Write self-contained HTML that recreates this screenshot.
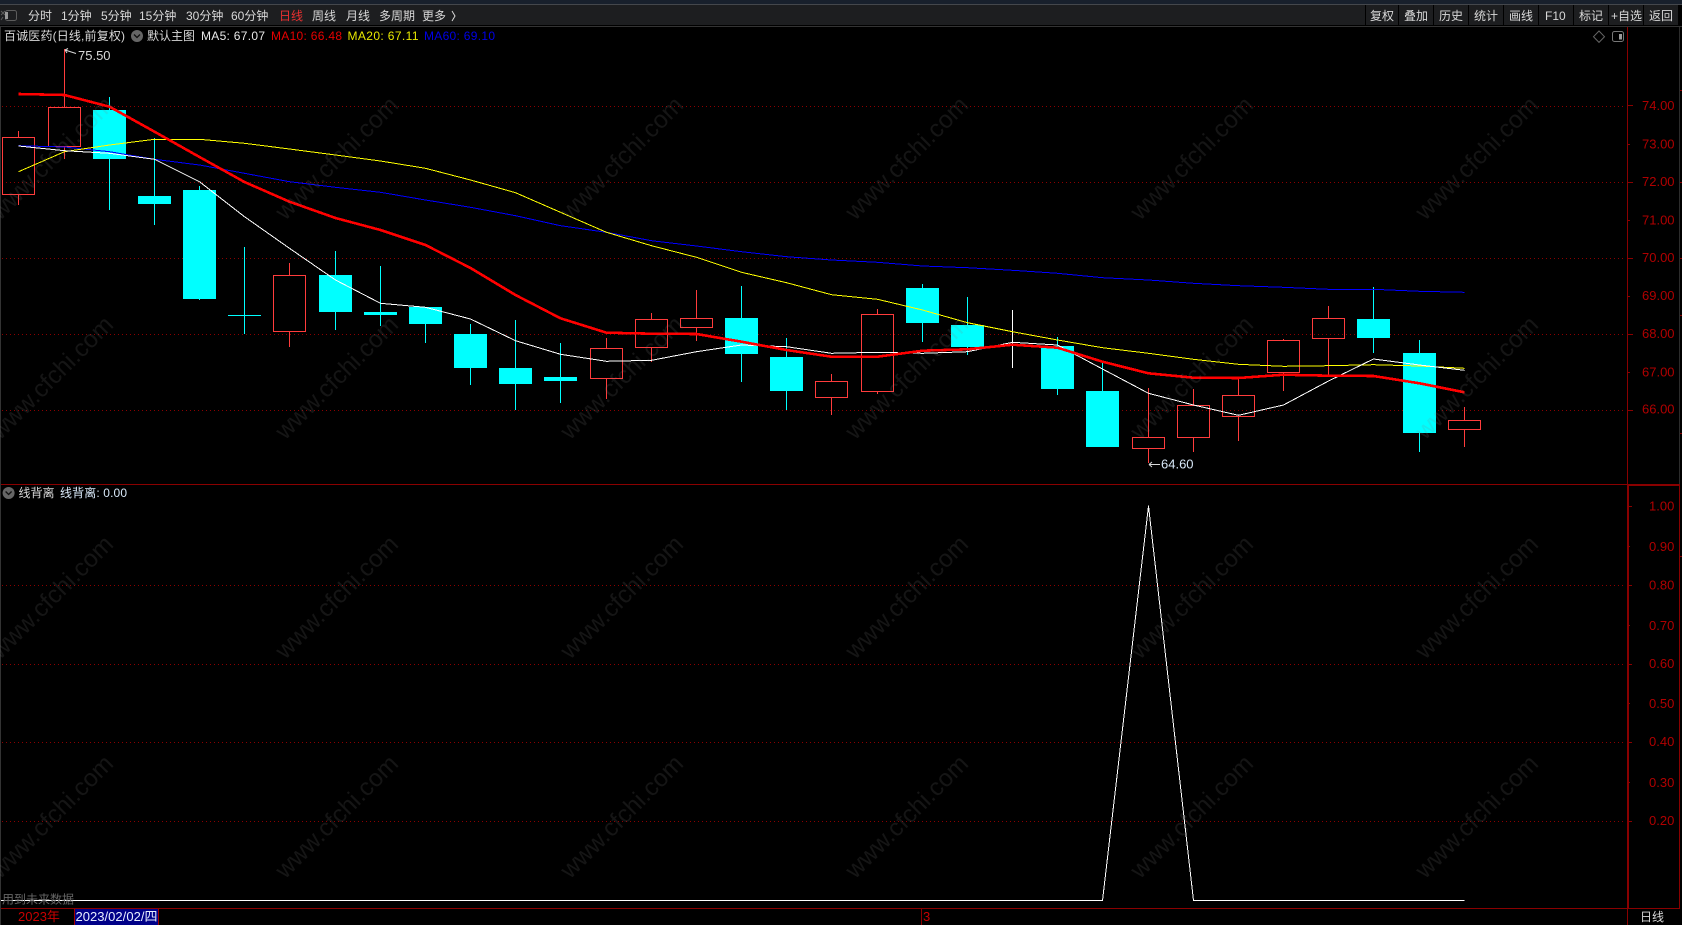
<!DOCTYPE html>
<html lang="zh-CN"><head><meta charset="utf-8"><title>百诚医药</title>
<style>
html,body{margin:0;padding:0;background:#000;width:1682px;height:925px;overflow:hidden}
svg{display:block;position:absolute;left:0;top:0}
text{font-family:"Liberation Sans","Noto Sans CJK SC",sans-serif;font-size:12px}
.c{shape-rendering:crispEdges}
.wm text{font-size:24.500px;fill:#808080;opacity:.16}
.tb text{fill:#d8d8d8}
.ax text{fill:#b00000;font-size:13px}
</style></head><body>
<svg width="1682" height="925" viewBox="0 0 1682 925" xmlns="http://www.w3.org/2000/svg">
<rect width="1682" height="925" fill="#000"/>
<!-- top strip + toolbar -->
<g class="c">
<rect width="1682" height="4" fill="#18202c"/>
<rect y="4" width="1682" height="1" fill="#44474c"/>
<rect y="5" width="1679" height="20" fill="#1d1e20"/>
<rect y="25" width="1682" height="1" fill="#000"/>
<rect y="26" width="1682" height="1" fill="#333"/>
<rect x="1365" y="5" width="1" height="20" fill="#000"/><rect x="1398" y="5" width="1" height="20" fill="#000"/><rect x="1433" y="5" width="1" height="20" fill="#000"/><rect x="1468" y="5" width="1" height="20" fill="#000"/><rect x="1503" y="5" width="1" height="20" fill="#000"/><rect x="1538" y="5" width="1" height="20" fill="#000"/><rect x="1573" y="5" width="1" height="20" fill="#000"/><rect x="1608" y="5" width="1" height="20" fill="#000"/><rect x="1643" y="5" width="1" height="20" fill="#000"/><rect x="1678" y="5" width="1" height="20" fill="#000"/>
<rect x="0" y="27" width="1" height="898" fill="#333"/>
<rect x="1679" y="27" width="1" height="458" fill="#2c2c2c"/>
</g>
<g fill="none" stroke="#5c5c5c" stroke-width="1">
<rect x="5.500" y="10.500" width="11" height="10" rx="2"/>
<path d="M1 11l4 4M5 11l-4 4M3 17l-2 3"/>
</g>
<rect x="5" y="12" width="3" height="7" fill="#999"/>
<g class="tb">
<text x="28" y="20">分时</text><text x="61" y="20">1分钟</text><text x="101" y="20">5分钟</text><text x="139" y="20">15分钟</text><text x="186" y="20">30分钟</text><text x="231" y="20">60分钟</text>
<text x="279" y="20" style="fill:#e83030">日线</text>
<text x="312" y="20">周线</text><text x="346" y="20">月线</text><text x="379" y="20">多周期</text><text x="422" y="20">更多</text>
<text x="1370" y="20">复权</text><text x="1404" y="20">叠加</text><text x="1439" y="20">历史</text><text x="1474" y="20">统计</text><text x="1509" y="20">画线</text><text x="1545" y="20">F10</text><text x="1579" y="20">标记</text><text x="1611" y="20">+自选</text><text x="1649" y="20">返回</text>
</g>
<path d="M452 11l3 5-3 5" fill="none" stroke="#d8d8d8"/>
<!-- grid -->
<g stroke="#8c0000" stroke-width="1" stroke-dasharray="1 3" class="c">
<path d="M2 106.500H1625M2 182.500H1625M2 258.500H1625M2 334.500H1625M2 410.500H1625M2 585.500H1625M2 664.500H1625M2 742.500H1625M2 821.500H1625"/>
</g>
<!-- candles -->
<g class="c" fill="none" stroke="#ff3c3c" stroke-width="1">
<path d="M18.500 131V137M18.500 195V205M64.500 49V107M64.500 147V159M289.500 263V275M289.500 332V347M606.500 338V348M606.500 379V399M651.500 313V319M651.500 348V362M696.500 290V318M696.500 328V341M831.500 374V381M831.500 398V415M877.500 309V314M877.500 392V394M1148.500 388V437M1148.500 449V463M1193.500 389V405M1193.500 438V452M1238.500 378V395M1238.500 417V441M1283.500 339V340M1283.500 373V391M1328.500 306V318M1328.500 339V376M1464.500 407V420M1464.500 430V447"/>
<rect x="2.500" y="137.500" width="32" height="57"/><rect x="48.500" y="107.500" width="32" height="39"/><rect x="273.500" y="275.500" width="32" height="56"/><rect x="590.500" y="348.500" width="32" height="30"/><rect x="635.500" y="319.500" width="32" height="28"/><rect x="680.500" y="318.500" width="32" height="9"/><rect x="815.500" y="381.500" width="32" height="16"/><rect x="861.500" y="314.500" width="32" height="77"/><rect x="1132.500" y="437.500" width="32" height="11"/><rect x="1177.500" y="405.500" width="32" height="32"/><rect x="1222.500" y="395.500" width="32" height="21"/><rect x="1267.500" y="340.500" width="32" height="32"/><rect x="1312.500" y="318.500" width="32" height="20"/><rect x="1448.500" y="420.500" width="32" height="9"/>
</g>
<g class="c" stroke="#0ff" stroke-width="1">
<path d="M109.500 97V210M154.500 138V225M199.500 186V300M244.500 247V334M335.500 251V330M380.500 266V326M425.500 307V343M470.500 324V385M515.500 320V410M560.500 343V403M741.500 286V382M786.500 338V410M922.500 284V342M967.500 297V355M1057.500 337V395M1102.500 363V447M1373.500 287V353M1419.500 340V452"/>
</g>
<g class="c" fill="#0ff">
<rect x="93" y="110" width="33" height="49"/><rect x="138" y="196" width="33" height="8"/><rect x="183" y="190" width="33" height="109"/><rect x="228" y="315" width="33" height="1"/><rect x="319" y="275" width="33" height="37"/><rect x="364" y="312" width="33" height="3"/><rect x="409" y="307" width="33" height="17"/><rect x="454" y="334" width="33" height="34"/><rect x="499" y="368" width="33" height="16"/><rect x="544" y="377" width="33" height="4"/><rect x="725" y="318" width="33" height="36"/><rect x="770" y="357" width="33" height="34"/><rect x="906" y="288" width="33" height="35"/><rect x="951" y="325" width="33" height="22"/><rect x="1041" y="346" width="33" height="43"/><rect x="1086" y="391" width="33" height="56"/><rect x="1357" y="319" width="33" height="19"/><rect x="1403" y="353" width="33" height="80"/>
</g>
<path class="c" d="M1012.500 310V368" stroke="#fff" fill="none"/>
<!-- MAs -->
<g class="c" fill="none" stroke-linejoin="round">
<polyline stroke="#0000ff" stroke-width="1" points="18.500,145.700 64.500,147 109.500,151.700 154.500,159.300 199.500,165 244.500,173.300 289.500,181.700 335.500,187.300 380.500,192.300 425.500,200 470.500,207.300 515.500,215.700 560.500,225.700 606.500,232.300 651.500,240.700 696.500,246 741.500,251.700 786.500,256.700 831.500,260 877.500,262.300 922.500,266 967.500,267.700 1012.500,270.300 1057.500,273.300 1102.500,277.700 1148.500,280 1193.500,283.300 1238.500,285.700 1283.500,287.300 1328.500,289.300 1373.500,289.300 1419.500,291.300 1464.500,292.300"/>
<polyline stroke="#ffff00" stroke-width="1" points="18.500,171.700 64.500,151.700 109.500,145 154.500,139.300 199.500,139.300 244.500,143.300 289.500,149 335.500,155 380.500,161 425.500,168.300 470.500,180 515.500,192.700 560.500,212.300 606.500,232.300 651.500,245.700 696.500,257.300 741.500,272.300 786.500,282.700 831.500,294.700 877.500,299.300 922.500,310 967.500,322.700 1012.500,331.700 1057.500,340 1102.500,347.700 1148.500,353.300 1193.500,359.300 1238.500,364.300 1283.500,366.300 1328.500,365.700 1373.500,364.700 1419.500,366 1464.500,368.300"/>
<polyline stroke="#ffffff" stroke-width="1" points="18.500,146 64.500,150.700 109.500,153.300 154.500,159.300 199.500,181.700 244.500,216.700 289.500,248.300 335.500,280 380.500,303.300 425.500,307.300 470.500,319 515.500,340.700 560.500,354.300 606.500,361.300 651.500,360.300 696.500,351.700 741.500,345 786.500,346.700 831.500,353.300 877.500,352.300 922.500,353.300 967.500,351.700 1012.500,342.300 1057.500,345 1102.500,369 1148.500,393.300 1193.500,405 1238.500,415.300 1283.500,405 1328.500,381 1373.500,359 1419.500,365 1464.500,370.300"/>
<polyline stroke="#ff0000" stroke-width="2.600" points="18.500,94 64.500,95 109.500,106.700 154.500,131.700 199.500,157 244.500,182 289.500,201.700 335.500,218 380.500,230 425.500,245 470.500,268 515.500,295 560.500,318.300 606.500,332.700 651.500,333.700 696.500,334 741.500,341.700 786.500,350 831.500,356.700 877.500,356.700 922.500,350.700 967.500,349.300 1012.500,344.700 1057.500,347.700 1102.500,361.700 1148.500,373.300 1193.500,377.700 1238.500,378 1283.500,374.700 1328.500,375.700 1373.500,376 1419.500,383.300 1464.500,392.300"/>
<polyline stroke="#ffffff" stroke-width="1" points="1,900.500 1102.500,900.500 1148.500,506 1193.500,900.500 1464.500,900.500"/>
</g>
<!-- labels -->
<text x="4" y="40" fill="#d8d8d8" textLength="121">百诚医药(日线,前复权)</text>
<circle cx="137" cy="36" r="6" fill="#666"/><path d="M134 34.500l3 3 3-3" fill="none" stroke="#111" stroke-width="1.300"/>
<text x="147" y="40" fill="#d8d8d8">默认主图</text>
<text x="201" y="40" fill="#e8e8e8" textLength="64">MA5: 67.07</text>
<text x="271" y="40" fill="#e80000" textLength="71">MA10: 66.48</text>
<text x="347.500" y="40" fill="#e8e800" textLength="71">MA20: 67.11</text>
<text x="424" y="40" fill="#0000e8" textLength="71">MA60: 69.10</text>
<text x="78" y="60" fill="#d8d8d8" style="font-size:13px">75.50</text>
<path d="M65 50l11 3.500M65 50l3-1.500M65 50l2 3" fill="none" stroke="#d8d8d8"/>
<text x="1161" y="468.500" fill="#d8e8f8" style="font-size:13px">64.60</text>
<path d="M1149 464.500h11M1149 464.500l3-2.500M1149 464.500l3 2.500" fill="none" stroke="#d8d8d8"/>
<path d="M1599 31l5.500 5.700-5.500 5.700-5.500-5.700z" fill="none" stroke="#666"/>
<rect x="1612.500" y="31.500" width="11" height="10" rx="2" fill="none" stroke="#777"/><rect x="1619" y="34" width="3" height="5.500" fill="#999"/>
<circle cx="8.600" cy="493" r="6" fill="#666"/><path d="M5.600 491.500l3 3 3-3" fill="none" stroke="#111" stroke-width="1.300"/>
<text x="18.500" y="497" fill="#d8d8d8">线背离</text>
<text x="60" y="497" fill="#d8e8f8" textLength="67">线背离: 0.00</text>
<text x="2" y="903.500" fill="#666">用到未来数据</text>
<!-- structure lines -->
<g class="c">
<rect x="1" y="484" width="1626" height="1" fill="#8a0000"/>
<rect x="1627" y="27" width="1" height="898" fill="#8a0000"/>
<rect x="1627" y="484" width="52" height="2" fill="#8a0000"/>
<rect x="1627" y="485" width="2" height="424" fill="#8a0000"/>
<rect x="1679" y="484" width="1" height="425" fill="#8a0000"/>
<rect x="1" y="908" width="1679" height="1" fill="#8a0000"/>
<path d="M1627 105.500h6M1627 144.500h3M1627 182.500h6M1627 220.500h3M1627 258.500h6M1627 296.500h3M1627 334.500h6M1627 372.500h3M1627 410.500h6M1627 506.500h5M1627 546.500h3M1627 585.500h5M1627 625.500h3M1627 664.500h5M1627 703.500h3M1627 742.500h5M1627 782.500h3M1627 821.500h5" stroke="#8a0000" fill="none"/>
<path d="M1680 90.500h2M1680 182.500h2M1680 258.500h2M1680 315.500h2M1680 433.500h2M1680 556.500h2" stroke="#8a0000" fill="none"/>
<rect x="74" y="909" width="85" height="16" fill="#000088"/>
<rect x="74" y="909" width="1" height="16" fill="#a00000"/><rect x="158" y="909" width="1" height="16" fill="#a00000"/>
<rect x="921" y="909" width="1" height="16" fill="#8a0000"/>
</g>
<g class="ax">
<text x="1642" y="110">74.00</text><text x="1642" y="148.500">73.00</text><text x="1642" y="186">72.00</text><text x="1642" y="224.500">71.00</text><text x="1642" y="262">70.00</text><text x="1642" y="300">69.00</text><text x="1642" y="338">68.00</text><text x="1642" y="376.500">67.00</text><text x="1642" y="413.500">66.00</text>
<text x="1649" y="510.500">1.00</text><text x="1649" y="551">0.90</text><text x="1649" y="589.500">0.80</text><text x="1649" y="630">0.70</text><text x="1649" y="668">0.60</text><text x="1649" y="708">0.50</text><text x="1649" y="746">0.40</text><text x="1649" y="787">0.30</text><text x="1649" y="825">0.20</text>
</g>
<text x="18" y="921" fill="#c80000" style="font-size:13px">2023年</text>
<text x="75.500" y="921" fill="#e8eeff" style="font-size:13px" textLength="82">2023/02/02/四</text>
<text x="923" y="921" fill="#c80000" style="font-size:13px">3</text>
<text x="1640" y="921" fill="#d8d8d8">日线</text>
<!-- watermarks -->
<g class="wm" text-anchor="middle">
<text transform="translate(51 157.500) rotate(-45)" y="9">www.cfchi.com</text><text transform="translate(336 157.500) rotate(-45)" y="9">www.cfchi.com</text><text transform="translate(621 157.500) rotate(-45)" y="9">www.cfchi.com</text><text transform="translate(906 157.500) rotate(-45)" y="9">www.cfchi.com</text><text transform="translate(1191 157.500) rotate(-45)" y="9">www.cfchi.com</text><text transform="translate(1476 157.500) rotate(-45)" y="9">www.cfchi.com</text>
<text transform="translate(51 377) rotate(-45)" y="9">www.cfchi.com</text><text transform="translate(336 377) rotate(-45)" y="9">www.cfchi.com</text><text transform="translate(621 377) rotate(-45)" y="9">www.cfchi.com</text><text transform="translate(906 377) rotate(-45)" y="9">www.cfchi.com</text><text transform="translate(1191 377) rotate(-45)" y="9">www.cfchi.com</text><text transform="translate(1476 377) rotate(-45)" y="9">www.cfchi.com</text>
<text transform="translate(51 596.500) rotate(-45)" y="9">www.cfchi.com</text><text transform="translate(336 596.500) rotate(-45)" y="9">www.cfchi.com</text><text transform="translate(621 596.500) rotate(-45)" y="9">www.cfchi.com</text><text transform="translate(906 596.500) rotate(-45)" y="9">www.cfchi.com</text><text transform="translate(1191 596.500) rotate(-45)" y="9">www.cfchi.com</text><text transform="translate(1476 596.500) rotate(-45)" y="9">www.cfchi.com</text>
<text transform="translate(51 816) rotate(-45)" y="9">www.cfchi.com</text><text transform="translate(336 816) rotate(-45)" y="9">www.cfchi.com</text><text transform="translate(621 816) rotate(-45)" y="9">www.cfchi.com</text><text transform="translate(906 816) rotate(-45)" y="9">www.cfchi.com</text><text transform="translate(1191 816) rotate(-45)" y="9">www.cfchi.com</text><text transform="translate(1476 816) rotate(-45)" y="9">www.cfchi.com</text>
</g>
</svg>
</body></html>
